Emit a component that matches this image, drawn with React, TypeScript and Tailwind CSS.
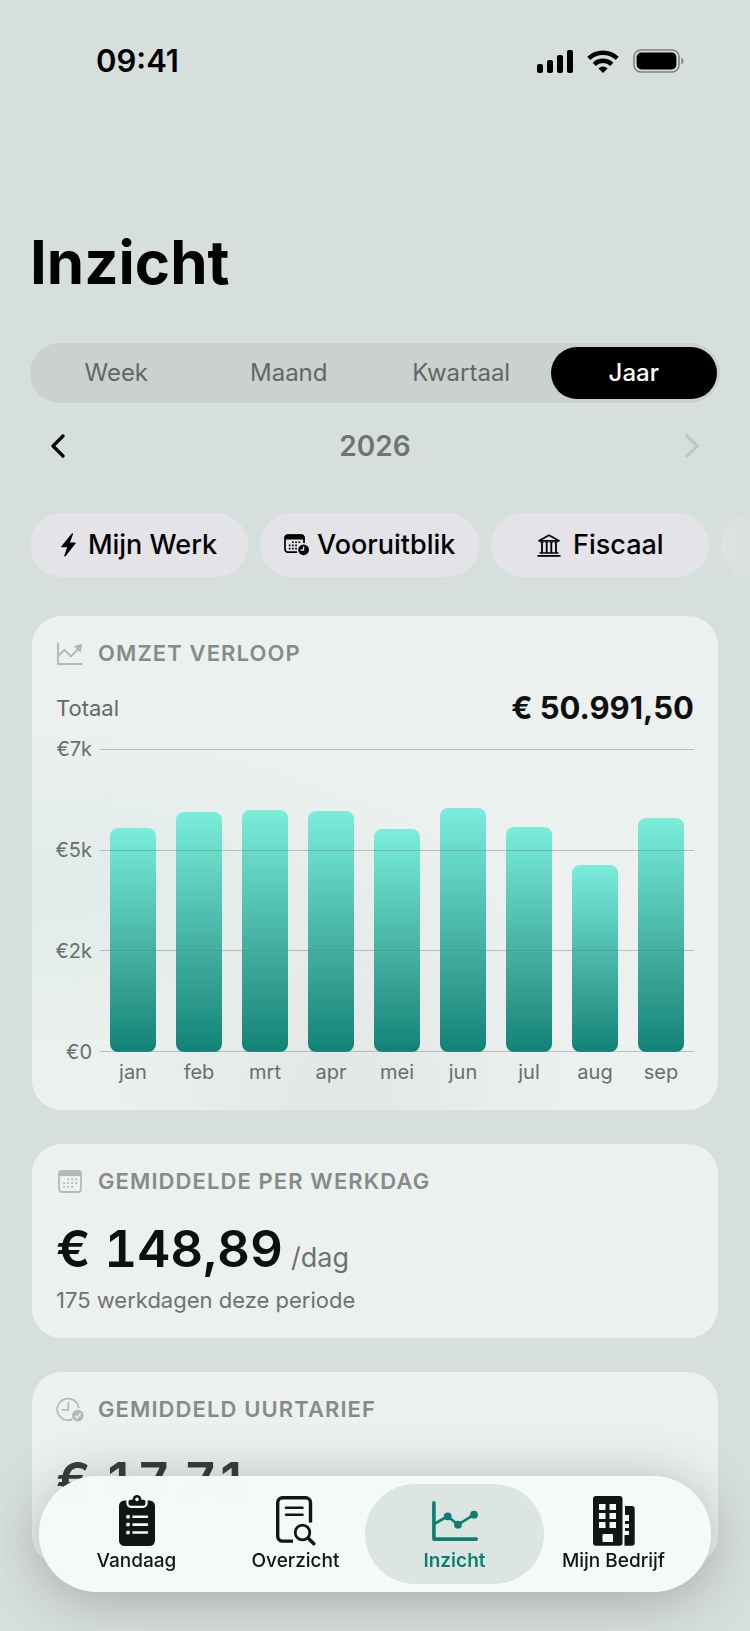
import React from 'react';

interface CardProps {
  icon: React.ReactNode;
  title: string;
  className?: string;
  children: React.ReactNode;
}

const periods = ['Week', 'Maand', 'Kwartaal', 'Jaar'];

const MAX_REVENUE = 7500;
const axisLabels = ['€7k', '€5k', '€2k', '€0'];

const revenue = [
  { month: 'jan', amount: 5545 },
  { month: 'feb', amount: 5930 },
  { month: 'mrt', amount: 6000 },
  { month: 'apr', amount: 5970 },
  { month: 'mei', amount: 5510 },
  { month: 'jun', amount: 6045 },
  { month: 'jul', amount: 5570 },
  { month: 'aug', amount: 4640 },
  { month: 'sep', amount: 5781.5 },
];

const SignalIcon = () => (
  <svg width="36" height="23" viewBox="0 0 36 23" fill="currentColor">
    <rect x="0" y="14" width="6" height="9" rx="2" />
    <rect x="10" y="10" width="6" height="13" rx="2" />
    <rect x="20" y="5" width="6" height="18" rx="2" />
    <rect x="30" y="0" width="6" height="23" rx="2" />
  </svg>
);

const WifiIcon = () => (
  <svg width="32" height="23" viewBox="0 0 32 23">
    <g fill="none" stroke="currentColor" strokeWidth="4.4">
      <path d="M1.8 8.4a20.5 20.5 0 0 1 28.4 0" />
      <path d="M7.2 14.4a12.6 12.6 0 0 1 17.6 0" />
    </g>
    <path d="M16 23l-4.6-4.6a6.6 6.6 0 0 1 9.2 0z" fill="currentColor" />
  </svg>
);

const BatteryIcon = () => (
  <svg width="51" height="24" viewBox="0 0 51 24">
    <rect x="1" y="1" width="45" height="22" rx="7" fill="none" stroke="#7d8280" strokeWidth="1.6" />
    <rect x="3.6" y="3.6" width="39.8" height="16.8" rx="4.6" fill="currentColor" />
    <path d="M48.4 8.6c2.6 1 2.6 5.8 0 6.8z" fill="#7d8280" />
  </svg>
);

const Chevron = ({ flip }: { flip?: boolean }) => (
  <svg
    width="14"
    height="24"
    viewBox="0 0 14 24"
    fill="none"
    stroke="currentColor"
    strokeWidth="3.2"
    strokeLinecap="round"
    strokeLinejoin="round"
  >
    <path d={flip ? 'M2 2l10 10L2 22' : 'M12 2L2 12l10 10'} />
  </svg>
);

const BoltIcon = () => (
  <svg width="15" height="24" viewBox="0 0 15 24" fill="currentColor">
    <path d="M10.8.6L.4 13.3c-.4.5-.1 1 .5 1h5.3L3.3 22.5c-.3.9.6 1.4 1.2.7L14.6 10.5c.4-.5.1-1-.5-1H8.9L12 1.3c.3-.9-.6-1.4-1.2-.7z" />
  </svg>
);

const ForecastIcon = () => (
  <svg width="25" height="22" viewBox="0 0 25 22">
    <path
      d="M13 18.2H4A3 3 0 0 1 1 15.2V4a3 3 0 0 1 3-3h13a3 3 0 0 1 3 3v5"
      fill="none"
      stroke="currentColor"
      strokeWidth="1.7"
    />
    <path d="M.5 5.5V3.5a3 3 0 0 1 3-3h14a3 3 0 0 1 3 3v2z" fill="currentColor" />
    <g fill="currentColor">
      <path d="M8 7.4h1.7v1.7H8zM11.2 7.4h1.7v1.7h-1.7zM14.4 7.4h1.7v1.7h-1.7z" />
      <path d="M4.8 10.6h1.7v1.7H4.8zM8 10.6h1.7v1.7H8zM11.2 10.6h1.7v1.7h-1.7z" />
      <path d="M4.8 13.8h1.7v1.7H4.8zM8 13.8h1.7v1.7H8zM11.2 13.8h1.7v1.7h-1.7z" />
    </g>
    <circle cx="19.6" cy="15.8" r="5.4" fill="currentColor" />
    <path d="M19.6 12.4v3.6h-3" fill="none" stroke="#e4e3e8" strokeWidth="1.3" />
  </svg>
);

const BankIcon = () => (
  <svg width="24" height="23" viewBox="0 0 24 23" fill="none" stroke="currentColor">
    <path d="M2 6.8L12 1.3l10 5.5z" strokeWidth="1.7" strokeLinejoin="round" />
    <path d="M5 8v11M9.7 8v11M14.3 8v11M19 8v11" strokeWidth="1.8" />
    <path d="M3.5 8.4h3M8.2 8.4h3M12.8 8.4h3M17.5 8.4h3" strokeWidth="1.2" />
    <path d="M2.5 19h19" strokeWidth="1.5" />
    <path d="M.5 21.9h23" strokeWidth="1.8" />
  </svg>
);

const TrendIcon = () => (
  <svg width="26" height="23" viewBox="0 0 26 23" fill="none" stroke="currentColor">
    <path d="M1 .5V22h24.5" strokeWidth="1.9" />
    <path d="M1.5 13.5L7.5 8l6.5 6.5 7-7.5" strokeWidth="1.9" />
    <path d="M17.5 4.5l7-2-1 7.5z" fill="currentColor" strokeWidth="1" />
  </svg>
);

const CalendarIcon = () => (
  <svg width="24" height="23" viewBox="0 0 24 23">
    <rect x="1" y="1" width="22" height="21" rx="3" fill="none" stroke="currentColor" strokeWidth="1.8" />
    <path d="M.5 6V3.5a3 3 0 0 1 3-3h17a3 3 0 0 1 3 3V6z" fill="currentColor" />
    <g stroke="currentColor" strokeWidth="1.7" strokeDasharray="1.7 2.3">
      <path d="M9.3 9.3h9.7" />
      <path d="M5.3 13.1h13.7" />
      <path d="M5.3 16.9h9.7" />
    </g>
  </svg>
);

const ClockCheckIcon = () => (
  <svg width="29" height="25" viewBox="0 0 29 25" fill="none" stroke="currentColor">
    <path d="M16.8 22.7A11.2 11.2 0 1 1 23.6 11" strokeWidth="1.8" />
    <path d="M12.8 4.8v8H6" strokeWidth="1.8" />
    <circle cx="22.6" cy="18.8" r="6" fill="currentColor" stroke="none" />
    <path d="M19.8 19l2 2.3 3.7-4.8" stroke="#ecf1ef" strokeWidth="1.5" />
  </svg>
);

const ClipboardIcon = () => (
  <svg width="36" height="52" viewBox="0 0 36 52">
    <rect x="0" y="5.5" width="36" height="45.5" rx="5.5" fill="currentColor" />
    <path
      d="M11.5 4.8h13a2 2 0 0 1 2 2v1.4a2.5 2.5 0 0 1-2.5 2.5H12a2.5 2.5 0 0 1-2.5-2.5V6.8a2 2 0 0 1 2-2z"
      fill="currentColor"
      stroke="#f3faf8"
      strokeWidth="4.4"
      paintOrder="stroke"
    />
    <circle cx="18" cy="4.3" r="4.3" fill="currentColor" />
    <circle cx="18" cy="4.4" r="1.8" fill="#f3faf8" />
    <g fill="#f3faf8">
      <circle cx="9" cy="21.7" r="2" />
      <circle cx="9" cy="29.6" r="2" />
      <circle cx="9" cy="37.5" r="2" />
    </g>
    <path
      d="M14.5 21.7h13.5M14.5 29.6h13.5M14.5 37.5h13.5"
      stroke="#f3faf8"
      strokeWidth="2.6"
      strokeLinecap="round"
    />
  </svg>
);

const DocumentSearchIcon = () => (
  <svg width="40" height="50" viewBox="0 0 40 50" fill="none" stroke="currentColor" strokeLinecap="round">
    <path
      d="M34.5 26.5V6.5a4.8 4.8 0 0 0-4.8-4.8H6.5a4.8 4.8 0 0 0-4.8 4.8v33.8a4.8 4.8 0 0 0 4.8 4.8h10.5"
      strokeWidth="3.4"
      strokeLinecap="butt"
    />
    <path d="M10 11.7h16.5M10 18.7h16.5" strokeWidth="2.5" />
    <circle cx="26.5" cy="36.5" r="7.3" strokeWidth="2.8" />
    <path d="M32.5 42.5l5.3 5.3" strokeWidth="3.4" />
  </svg>
);

const ChartIcon = () => (
  <svg width="46" height="42" viewBox="0 0 46 42" fill="none" stroke="currentColor">
    <path
      d="M1.9 2.9v36.2h42.3"
      strokeWidth="3.6"
      strokeLinecap="round"
      strokeLinejoin="round"
    />
    <path d="M2 24l13.7-7.7L26 24.7l16-10" strokeWidth="2.6" />
    <g fill="currentColor" stroke="none">
      <circle cx="15.7" cy="16.3" r="3.9" />
      <circle cx="26" cy="24.7" r="3.9" />
      <circle cx="42" cy="14.7" r="3.9" />
    </g>
  </svg>
);

const BuildingIcon = () => (
  <svg width="42" height="50" viewBox="0 0 42 50" fill="currentColor">
    <path
      fillRule="evenodd"
      d="M3 0h23.5a3 3 0 0 1 3 3v43.7a3 3 0 0 1-3 3H3a3 3 0 0 1-3-3V3a3 3 0 0 1 3-3zM6 8v6h6.500V8zM16.500 8v6H23V8zM6 17v6h6.500v-6zM16.500 17v6H23v-6zM6 26v6h6.500v-6zM16.500 26v6H23v-6zM10.500 38a1 1 0 0 0-1 1v7H20v-7a1 1 0 0 0-1-1z"
    />
    <path d="M32 10h6.700a3 3 0 0 1 3 3v33.700a3 3 0 0 1-3 3H31.500V39H36v-4h-4v-3h4v-4h-4v-3h4v-6h-4z" />
  </svg>
);

const tabs = [
  { label: 'Vandaag', icon: <ClipboardIcon /> },
  { label: 'Overzicht', icon: <DocumentSearchIcon /> },
  { label: 'Inzicht', icon: <ChartIcon /> },
  { label: 'Mijn Bedrijf', icon: <BuildingIcon /> },
];

const chips = [
  { label: 'Mijn Werk', icon: <BoltIcon />, gap: 'gap-3' },
  { label: 'Vooruitblik', icon: <ForecastIcon />, gap: 'gap-2' },
  { label: 'Fiscaal', icon: <BankIcon />, gap: 'gap-3' },
];

const Card: React.FC<CardProps> = ({ icon, title, className = 'bg-[#ecf1ef]', children }) => (
  <section className={`rounded-[30px] px-6 pt-[23px] pb-[22px] ${className}`}>
    <h2 className="flex h-7 items-center gap-[14px] text-[22px] font-semibold tracking-wider text-[#868b8a]">
      <span className="flex w-7 justify-center text-[#b4b9b7]">{icon}</span>
      {title}
    </h2>
    {children}
  </section>
);

const RevenueChart = () => (
  <div className="mt-[23px] flex">
    <div className="flex h-[303px] w-9 flex-col justify-between text-right text-xl text-[#686e6c]">
      {axisLabels.map((label) => (
        <span key={label} className="flex h-0 items-center justify-end">
          {label}
        </span>
      ))}
    </div>
    <div className="ml-2 flex-1">
      <div className="relative h-[303px]">
        <div className="flex h-full items-end">
          {revenue.map(({ month, amount }) => (
            <div key={month} className="flex h-full flex-1 items-end justify-center">
              <div
                className="w-[70%] rounded-lg bg-linear-to-b from-[#7aeedb] to-[#0e8376]"
                style={{ height: `${(amount / MAX_REVENUE) * 100}%` }}
              />
            </div>
          ))}
        </div>
        <div className="absolute inset-0 flex flex-col justify-between">
          {axisLabels.map((label) => (
            <div key={label} className="h-px bg-[#6b7775]/40" />
          ))}
        </div>
      </div>
      <div className="mt-1 flex text-xl leading-8 text-[#686e6c]">
        {revenue.map(({ month }) => (
          <span key={month} className="flex-1 text-center">
            {month}
          </span>
        ))}
      </div>
    </div>
  </div>
);

export default function App() {
  return (
    <div className="min-h-screen overflow-hidden bg-[#d7dfdc] font-['Inter',sans-serif] text-black">
      <header className="flex items-center justify-between pt-10 pr-[66px] pl-24">
        <span className="text-[31px] leading-[42px] font-semibold">09:41</span>
        <div className="flex items-center gap-[14px]">
          <SignalIcon />
          <WifiIcon />
          <BatteryIcon />
        </div>
      </header>

      <main className="px-[30px] pt-[142px] pb-16">
        <h1 className="text-[60px] leading-[76px] font-bold">Inzicht</h1>

        <div className="mt-[43px] grid grid-cols-4 rounded-full bg-[#cbd1ce] py-1">
          {periods.map((period) => (
            <button
              key={period}
              type="button"
              className={`mx-[3px] h-[52px] rounded-full text-2xl ${
                period === 'Jaar' ? 'bg-black font-medium text-white' : 'text-[#616866]'
              }`}
            >
              {period}
            </button>
          ))}
        </div>

        <div className="mt-[23px] flex h-10 items-center justify-between px-[21px]">
          <button type="button" aria-label="Vorige">
            <Chevron />
          </button>
          <span className="text-[28px] font-semibold text-[#6d7472]">2026</span>
          <button type="button" aria-label="Volgende" disabled className="text-[#bfc6c3]">
            <Chevron flip />
          </button>
        </div>

        <div className="-mr-[30px] mt-[47px] flex gap-3 overflow-hidden">
          {chips.map(({ label, icon, gap }) => (
            <button
              key={label}
              type="button"
              className={`flex h-16 min-w-[218px] shrink-0 items-center justify-center rounded-full bg-[#e4e3e8] px-6 text-[27px] font-medium ${gap}`}
            >
              {icon}
              {label}
            </button>
          ))}
          <div className="h-16 w-[218px] shrink-0 rounded-full bg-linear-to-r from-[#e0e2e4] to-[#d7dfdc] to-15%" />
        </div>

        <div className="mx-[2px] mt-[39px] flex flex-col gap-[34px]">
          <Card
            icon={<TrendIcon />}
            title="OMZET VERLOOP"
            className="bg-[#ecf1ef] bg-[radial-gradient(ellipse_at_0%_55%,#e0ebe9_0%,transparent_45%),radial-gradient(ellipse_at_45%_100%,#e2e6e5_0%,transparent_45%)]"
          >
            <div className="mt-[23px] flex h-9 items-center justify-between">
              <span className="text-[22px] text-[#646b69]">Totaal</span>
              <span className="text-[31px] font-bold text-[#0c100f]">€ 50.991,50</span>
            </div>
            <RevenueChart />
          </Card>

          <Card icon={<CalendarIcon />} title="GEMIDDELDE PER WERKDAG">
            <p className="mt-6 flex h-[60px] items-baseline gap-2 text-[#0c100f]">
              <span className="text-[51px] leading-[60px] font-semibold tabular-nums">€ 148,89</span>
              <span className="text-[27px] leading-8 text-[#6d7371]">/dag</span>
            </p>
            <p className="mt-[5px] text-[22px] leading-8 text-[#6d7371]">175 werkdagen deze periode</p>
          </Card>

          <Card icon={<ClockCheckIcon />} title="GEMIDDELD UURTARIEF">
            <p className="mt-7 mb-8 text-[51px] leading-[60px] font-semibold text-[#3a3e3d] tabular-nums">
              € 17,71
            </p>
          </Card>
        </div>
      </main>

      <nav className="fixed inset-x-[39px] bottom-[39px] grid h-[116px] grid-cols-4 items-center rounded-full bg-[#f3faf8]/98 px-[18px] shadow-[0_6px_56px_rgba(0,0,0,0.26)] backdrop-blur-md">
        {tabs.map(({ label, icon }) => (
          <a
            key={label}
            href="#"
            className={`-mx-[10px] flex h-[100px] flex-col items-center rounded-full pt-[9px] text-[19px] leading-6 ${
              label === 'Inzicht' ? 'bg-[#dde5e2] font-semibold text-[#0b7f70]' : 'font-medium text-[#101614]'
            }`}
          >
            <span className="flex h-14 items-center">{icon}</span>
            {label}
          </a>
        ))}
      </nav>
    </div>
  );
}
